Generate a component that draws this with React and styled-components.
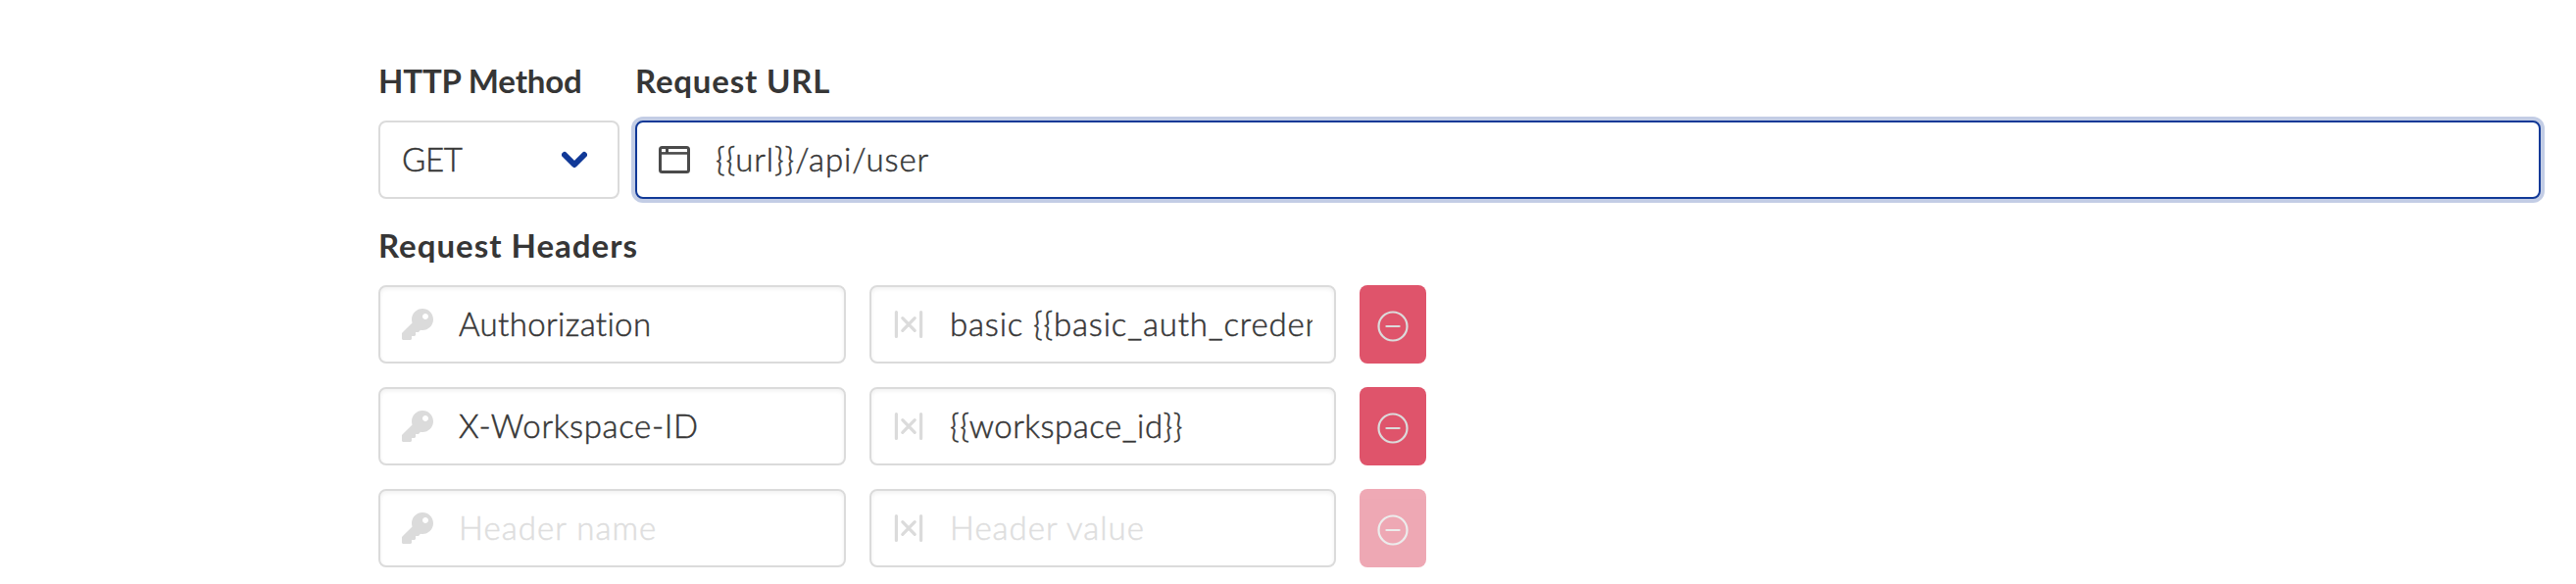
import React from "react";
import styled, { createGlobalStyle } from "styled-components";
import { FaKey } from "react-icons/fa";

const GlobalStyle = createGlobalStyle`
  *, *::before, *::after { box-sizing: border-box; }
  body {
    margin: 0;
    background: #fff;
    color: #363636;
    font-family: Lato, "Open Sans", sans-serif;
    font-size: 33px;
    font-weight: 300;
    line-height: 48px;
  }
`;

const Form = styled.main`
  padding: 58px 36px 0 386px;
  height: 596px;
  overflow: hidden;
`;

const RequestLine = styled.section`
  display: flex;
  gap: 16px;
`;

const Field = styled.div`
  display: flex;
  flex-direction: column;
  gap: 17px;
  flex: ${(p) => (p.$grow ? "1" : "0 0 auto")};
  width: ${(p) => (p.$width ? `${p.$width}px` : "auto")};
`;

const Label = styled.label`
  display: block;
  font-size: 33px;
  font-weight: 700;
  white-space: nowrap;
  letter-spacing: ${(p) => p.$track || 0}px;
`;

const Select = styled.button`
  display: flex;
  align-items: center;
  justify-content: space-between;
  height: 80px;
  padding: 0 31px 0 22px;
  border: 2px solid #dbdbdb;
  border-radius: 8px;
  background: #fff;
  color: inherit;
  font: inherit;
  letter-spacing: ${(p) => p.$track || 0}px;
`;

const SelectValue = styled.span`
  padding-bottom: 2px;
  -webkit-text-stroke: 0.5px currentColor;
`;

const Control = styled.div`
  display: flex;
  align-items: center;
  height: 80px;
  width: ${(p) => (p.$width ? `${p.$width}px` : "100%")};
  padding-right: 22px;
  border: 2px solid ${(p) => (p.$focused ? "#113997" : "#dbdbdb")};
  border-radius: 8px;
  background: #fff;
  box-shadow: ${(p) =>
    p.$focused ? "0 0 0 4px rgba(17, 57, 151, 0.25)" : "inset 0 2px 4px rgba(10, 10, 10, 0.06)"};
`;

const IconSlot = styled.span`
  display: flex;
  flex: 0 0 80px;
  align-items: center;
  justify-content: center;
  padding-right: 4px;
  color: ${(p) => (p.$active ? "#4a4a4a" : "#dbdbdb")};
`;

const Input = styled.input`
  flex: 1;
  min-width: 0;
  height: 50px;
  padding: 0 0 2px;
  border: 0;
  outline: 0;
  background: transparent;
  color: #363636;
  font: inherit;
  letter-spacing: ${(p) => p.$track || 0}px;
  -webkit-text-stroke: 0.5px currentColor;
  &::placeholder { color: #dedede; opacity: 1; -webkit-text-stroke: 0.5px #dedede; }
`;

const HeadersTitle = styled(Label)`
  margin: 23px 0 17px;
`;

const HeaderList = styled.section`
  display: flex;
  flex-direction: column;
  gap: 24px;
`;

const HeaderRow = styled.div`
  display: flex;
  gap: 24px;
`;

const RemoveButton = styled.button`
  display: flex;
  align-items: center;
  justify-content: center;
  width: 68px;
  height: 80px;
  padding: 4px 0 0;
  border: 0;
  border-radius: 8px;
  background: #df546b;
  color: #dbdbdb;
  opacity: ${(p) => (p.disabled ? 0.5 : 1)};
`;

const ChevronIcon = () => (
  <svg width="26" height="18" viewBox="0 0 26 18" fill="none" stroke="#113997" strokeWidth="6" strokeLinecap="round" strokeLinejoin="round">
    <path d="M3 4l10 10L23 4" />
  </svg>
);

const WindowIcon = () => (
  <svg width="32" height="28" viewBox="0 0 32 28" fill="none" stroke="currentColor">
    <rect x="1.5" y="1.5" width="29" height="25" rx="2" strokeWidth="3" />
    <path d="M2 7.4h28" strokeWidth="2.6" />
    <path d="M8.5 2v5" strokeWidth="3" />
  </svg>
);

const VariableIcon = () => (
  <svg width="30" height="28" viewBox="0 0 30 28" fill="none" stroke="currentColor" strokeWidth="3.2" strokeLinecap="round">
    <path d="M2.4 1.6v24.8M27.6 1.6v24.8M8.8 7.6l12.4 12.8M21.2 7.6l-12.4 12.8" />
  </svg>
);

const MinusCircleIcon = () => (
  <svg width="32" height="32" viewBox="0 0 32 32" fill="none" stroke="currentColor" strokeWidth="2.2" strokeLinecap="round">
    <circle cx="16" cy="16" r="14.5" />
    <path d="M9.4 16h13.2" />
  </svg>
);

const headers = [
  { name: "Authorization", nameTrack: 0.35, value: "basic {{basic_auth_credentials}}", valueTrack: 0.82 },
  { name: "X-Workspace-ID", nameTrack: 0.65, value: "{{workspace_id}}", valueTrack: 0.5 },
  { name: "", nameTrack: 1.05, value: "", valueTrack: 1 },
];

export default function App() {
  return (
    <>
      <GlobalStyle />
      <Form>
        <RequestLine>
          <Field $width={246}>
            <Label $track={-0.15}>HTTP Method</Label>
            <Select type="button" $track={-0.3}>
              <SelectValue>GET</SelectValue>
              <ChevronIcon />
            </Select>
          </Field>
          <Field $grow>
            <Label $track={0.8}>Request URL</Label>
            <Control $focused>
              <IconSlot $active><WindowIcon /></IconSlot>
              <Input defaultValue="{{url}}/api/user" $track={0.85} />
            </Control>
          </Field>
        </RequestLine>
        <HeadersTitle as="h2" $track={1}>Request Headers</HeadersTitle>
        <HeaderList>
          {headers.map((h, i) => (
            <HeaderRow key={i}>
              <Control $width={477}>
                <IconSlot><FaKey size={32} /></IconSlot>
                <Input defaultValue={h.name} placeholder="Header name" $track={h.nameTrack} />
              </Control>
              <Control $width={476}>
                <IconSlot><VariableIcon /></IconSlot>
                <Input defaultValue={h.value} placeholder="Header value" $track={h.valueTrack} />
              </Control>
              <RemoveButton type="button" disabled={!h.name} aria-label="Remove header">
                <MinusCircleIcon />
              </RemoveButton>
            </HeaderRow>
          ))}
        </HeaderList>
      </Form>
    </>
  );
}
